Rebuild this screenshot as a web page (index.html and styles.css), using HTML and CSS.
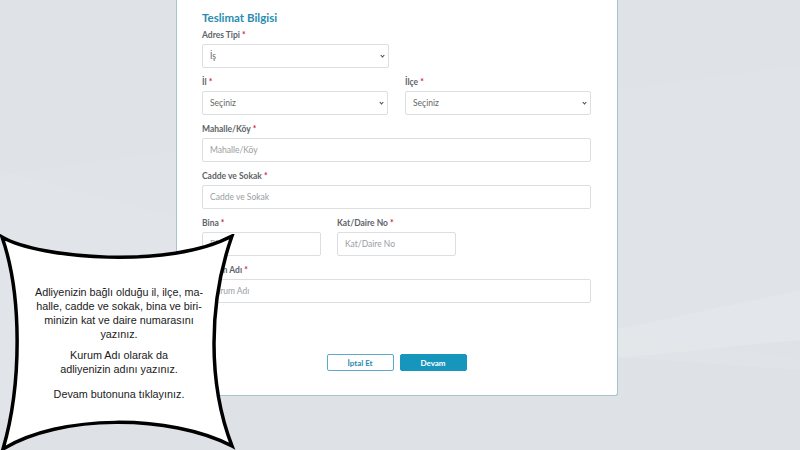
FILE: index.html
```html
<!DOCTYPE html>
<html lang="tr">
<head>
    <meta charset="UTF-8">
    <meta name="viewport" content="width=device-width, initial-scale=1.0">
    <title>Teslimat Bilgisi</title>
    <link rel="stylesheet" href="styles.css">
</head>
<body>
    <svg class="bg-shapes" width="800" height="450" viewBox="0 0 800 450">
        <polygon points="0,175 800,65 800,450 0,450" fill="#ffffff" opacity="0.06"/>
        <polygon points="0,170 600,330 800,360 800,450 0,450" fill="#ffffff" opacity="0.05"/>
        <polygon points="520,350 800,290 800,370" fill="#ffffff" opacity="0.12"/>
        <polygon points="0,450 0,420 800,340 800,450" fill="#c9ced4" opacity="0.1"/>
    </svg>

    <div class="page">
        <div class="card">
            <h2 class="card-title">Teslimat Bilgisi</h2>

            <div class="form-group half">
                <label>Adres Tipi <span class="req">*</span></label>
                <div class="select">İş</div>
            </div>

            <div class="form-row">
                <div class="form-group">
                    <label>İl <span class="req">*</span></label>
                    <div class="select">Seçiniz</div>
                </div>
                <div class="form-group">
                    <label>İlçe <span class="req">*</span></label>
                    <div class="select">Seçiniz</div>
                </div>
            </div>

            <div class="form-group">
                <label>Mahalle/Köy <span class="req">*</span></label>
                <input type="text" placeholder="Mahalle/Köy">
            </div>

            <div class="form-group">
                <label>Cadde ve Sokak <span class="req">*</span></label>
                <input type="text" placeholder="Cadde ve Sokak">
            </div>

            <div class="form-row narrow">
                <div class="form-group">
                    <label>Bina <span class="req">*</span></label>
                    <input type="text" placeholder="Bina">
                </div>
                <div class="form-group">
                    <label>Kat/Daire No <span class="req">*</span></label>
                    <input type="text" placeholder="Kat/Daire No">
                </div>
            </div>

            <div class="form-group">
                <label>Kurum Adı <span class="req">*</span></label>
                <input type="text" placeholder="Kurum Adı">
            </div>

            <div class="actions">
                <button class="btn btn-outline">İptal Et</button>
                <button class="btn btn-primary">Devam</button>
            </div>
        </div>
    </div>

    <div class="bubble">
        <svg class="bubble-shape" width="236" height="218" viewBox="0 0 236 218">
            <path d="M2,3 C40,25 170,35 232,2 C208,70 208,150 232,212 C170,180 60,180 3,215 C22,150 22,60 2,3 Z"
                  fill="#ffffff" stroke="#000000" stroke-width="3.5" stroke-linejoin="miter"/>
        </svg>
        <div class="bubble-text">
            <p>Adliyenizin bağlı olduğu il, ilçe, ma-<br>halle, cadde ve sokak, bina ve biri-<br>minizin kat ve daire numarasını<br>yazınız.</p>
            <p class="mid">Kurum Adı olarak da<br>adliyenizin adını yazınız.</p>
            <p>Devam butonuna tıklayınız.</p>
        </div>
    </div>
</body>
</html>
```

FILE: styles.css
```css
html, body { margin: 0; height: 100%; }
body {
    background: #dfe2e6;
    font-family: Lato, "Open Sans", sans-serif;
    overflow: hidden;
    position: relative;
}
.bg-shapes { position: absolute; left: 0; top: 0; }

.page { position: relative; padding-left: 176px; }
.card {
    width: 389px;
    margin-top: -10px;
    padding: 20px 26px 24px 25px;
    background: #ffffff;
    border: 1px solid #a6c3d1;
    border-top: none;
    border-radius: 0 0 3px 3px;
}
.card-title {
    margin: 0 0 2px;
    font-size: 11.5px;
    font-weight: 700;
    color: #2a8db0;
    line-height: 16px;
}

.form-group { margin-bottom: 7px; }
.form-group label {
    display: block;
    height: 14px;
    margin-bottom: 2px;
    font-size: 8.5px;
    font-weight: 700;
    color: #5e6468;
    line-height: 14px;
}
.req { color: #d0263a; }
.form-group.half { width: 187px; }
.form-row { display: flex; gap: 17px; }
.form-row .form-group { width: 186px; }
.form-row.narrow { gap: 16px; }
.form-row.narrow .form-group { width: 119px; }

.select, input {
    box-sizing: border-box;
    display: block;
    width: 100%;
    height: 24px;
    border: 1px solid #dcdfe2;
    border-radius: 2px;
    background: #fff;
    font-family: inherit;
    font-size: 8.5px;
    color: #666;
}
.select {
    position: relative;
    padding-left: 7px;
    line-height: 22px;
}
.select::after {
    content: "";
    position: absolute;
    right: 4px;
    top: 9px;
    width: 2px;
    height: 2px;
    border-right: 1px solid #444;
    border-bottom: 1px solid #444;
    transform: rotate(45deg);
}
input { padding: 0 7px; outline: none; }
input::placeholder { color: #9a9ea2; }

.actions {
    display: flex;
    justify-content: center;
    gap: 6px;
    margin-top: 51px;
}
.btn {
    box-sizing: border-box;
    width: 67px;
    height: 17px;
    border-radius: 2px;
    font-family: inherit;
    font-size: 8px;
    font-weight: 700;
    padding: 0;
}
.btn-outline { background: #fff; border: 1px solid #5aaac8; color: #2a8db0; }
.btn-primary { background: #1796bd; border: 1px solid #1796bd; color: #fff; }

.bubble {
    position: absolute;
    left: 0;
    top: 234px;
    width: 236px;
    height: 218px;
}
.bubble-shape { position: absolute; left: 0; top: 0; }
.bubble-text {
    position: absolute;
    left: 1px;
    top: 51px;
    width: 236px;
    text-align: center;
    font-family: "Liberation Sans", Arial, sans-serif;
    font-size: 10.8px;
    line-height: 14px;
    color: #1a1a1a;
}
.bubble-text p { margin: 0 0 7px; }
.bubble-text p.mid { margin-bottom: 11px; }
```
